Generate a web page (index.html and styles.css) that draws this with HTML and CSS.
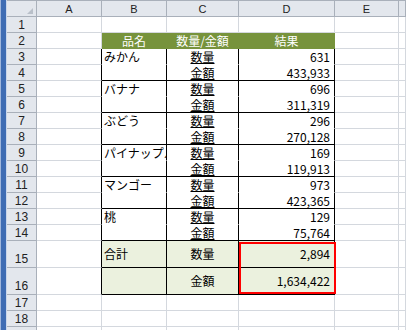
FILE: index.html
```html
<!DOCTYPE html>
<html lang="ja">
<head>
<meta charset="utf-8">
<title>集計</title>
<link rel="stylesheet" href="styles.css">
</head>
<body>
<div class="frame"></div>
<div class="main">
  <div class="topstrip"></div>
  <div class="sheet">
    <div class="h corner"></div><div class="h ch">A</div><div class="h ch">B</div><div class="h ch">C</div><div class="h ch">D</div><div class="h ch">E</div><div class="h ch"></div>

    <div class="h rh">1</div><div class="c"></div><div class="c"></div><div class="c"></div><div class="c"></div><div class="c"></div><div class="c"></div>
    <div class="h rh">2</div><div class="c"></div><div class="c g mid">品名</div><div class="c g mid">数量/金額</div><div class="c g mid">結果</div><div class="c"></div><div class="c"></div>

    <div class="h rh">3</div><div class="c kr"></div><div class="c kr nb txt">みかん</div><div class="c kr nb mid"><u>数量</u></div><div class="c kr nb num">631</div><div class="c"></div><div class="c"></div>
    <div class="h rh">4</div><div class="c kr"></div><div class="c kr kb"></div><div class="c kr kb mid"><u>金額</u></div><div class="c kr kb num">433,933</div><div class="c"></div><div class="c"></div>

    <div class="h rh">5</div><div class="c kr"></div><div class="c kr nb txt">バナナ</div><div class="c kr nb mid"><u>数量</u></div><div class="c kr nb num">696</div><div class="c"></div><div class="c"></div>
    <div class="h rh">6</div><div class="c kr"></div><div class="c kr kb"></div><div class="c kr kb mid"><u>金額</u></div><div class="c kr kb num">311,319</div><div class="c"></div><div class="c"></div>

    <div class="h rh">7</div><div class="c kr"></div><div class="c kr nb txt">ぶどう</div><div class="c kr nb mid"><u>数量</u></div><div class="c kr nb num">296</div><div class="c"></div><div class="c"></div>
    <div class="h rh">8</div><div class="c kr"></div><div class="c kr kb"></div><div class="c kr kb mid"><u>金額</u></div><div class="c kr kb num">270,128</div><div class="c"></div><div class="c"></div>

    <div class="h rh">9</div><div class="c kr"></div><div class="c kr nb txt">パイナップル</div><div class="c kr nb mid"><u>数量</u></div><div class="c kr nb num">169</div><div class="c"></div><div class="c"></div>
    <div class="h rh">10</div><div class="c kr"></div><div class="c kr kb"></div><div class="c kr kb mid"><u>金額</u></div><div class="c kr kb num">119,913</div><div class="c"></div><div class="c"></div>

    <div class="h rh">11</div><div class="c kr"></div><div class="c kr nb txt">マンゴー</div><div class="c kr nb mid"><u>数量</u></div><div class="c kr nb num">973</div><div class="c"></div><div class="c"></div>
    <div class="h rh">12</div><div class="c kr"></div><div class="c kr kb"></div><div class="c kr kb mid"><u>金額</u></div><div class="c kr kb num">423,365</div><div class="c"></div><div class="c"></div>

    <div class="h rh">13</div><div class="c kr"></div><div class="c kr nb txt">桃</div><div class="c kr nb mid"><u>数量</u></div><div class="c kr nb num">129</div><div class="c"></div><div class="c"></div>
    <div class="h rh">14</div><div class="c kr"></div><div class="c kr kb"></div><div class="c kr kb mid"><u>金額</u></div><div class="c kr kb num">75,764</div><div class="c"></div><div class="c"></div>

    <div class="h rh tall">15</div><div class="c kr"></div><div class="c kr kb tot txt">合計</div><div class="c kr kb tot mid">数量</div><div class="c kr kb tot num">2,894</div><div class="c"></div><div class="c"></div>
    <div class="h rh tall">16</div><div class="c kr"></div><div class="c kr kb tot"></div><div class="c kr kb tot mid">金額</div><div class="c kr kb tot num">1,634,422</div><div class="c"></div><div class="c"></div>

    <div class="h rh">17</div><div class="c"></div><div class="c"></div><div class="c"></div><div class="c"></div><div class="c"></div><div class="c"></div>
    <div class="h rh">18</div><div class="c"></div><div class="c"></div><div class="c"></div><div class="c"></div><div class="c"></div><div class="c"></div>
    <div class="h rh">19</div><div class="c"></div><div class="c"></div><div class="c"></div><div class="c"></div><div class="c"></div><div class="c"></div>

    <div class="sel"></div>
  </div>
</div>
</body>
</html>
```
FILE: styles.css
```css
html, body {
  margin: 0;
  padding: 0;
  background: #ffffff;
}
body {
  display: flex;
  width: 406px;
  height: 330px;
  overflow: hidden;
  font-family: "Noto Sans CJK JP", sans-serif;
  font-size: 12px;
  color: #000;
}
.frame {
  width: 7px;
  flex: none;
  background: linear-gradient(to right, #9fb6dc 0 1px, #3e6cb3 1px 6px, #c9d6ea 6px 7px);
}
.main {
  flex: 1;
  display: flex;
  flex-direction: column;
  min-width: 0;
}
.topstrip {
  height: 1px;
  background: #f2f3f5;
  border-bottom: 1px solid #a9b0ba;
}
.sheet {
  position: relative;
  display: grid;
  grid-template-columns: 30px 65px 65px 72px 96px 64px 1fr;
  grid-template-rows: 16px repeat(14, 16px) 27px 27px repeat(3, 16px);
}
.sheet > div {
  box-sizing: border-box;
  min-width: 0;
  overflow: hidden;
  white-space: nowrap;
  display: flex;
  align-items: center;
  line-height: 1;
}
.h {
  background: #e3e7ed;
  border-right: 1px solid #a9b0ba;
  border-bottom: 1px solid #a9b0ba;
  color: #222;
  justify-content: center;
}
.ch {
  font-family: "Liberation Sans", sans-serif;
  font-size: 11px;
  padding-top: 1px;
}
.rh {
  font-family: "Liberation Sans", sans-serif;
  font-size: 12px;
}
.rh.tall {
  align-items: flex-end;
  padding-bottom: 2px;
}
.corner {
  position: relative;
}
.corner::after {
  content: "";
  position: absolute;
  right: 3px;
  bottom: 2px;
  border-style: solid;
  border-width: 0 0 6px 6px;
  border-color: transparent transparent #b9c0c9 transparent;
}
.c {
  background: #ffffff;
  border-right: 1px solid #d4d8de;
  border-bottom: 1px solid #d4d8de;
}
.kr { border-right-color: #000; }
.kb { border-bottom-color: #000; }
.nb { border-bottom-color: transparent; }
.g {
  background: #77933c;
  color: #ffffff;
  border-right-color: transparent;
  border-bottom-color: transparent;
}
.tot { background: #ebf1de; }
.txt {
  justify-content: flex-start;
  padding-left: 2px;
}
.mid { justify-content: center; }
.num {
  justify-content: flex-end;
  padding-right: 4px;
}
u {
  text-decoration: underline;
  text-underline-offset: 1px;
}
.sheet > .sel {
  position: absolute;
  grid-column: 5 / 6;
  grid-row: 16 / 18;
  top: 1px;
  left: 0;
  right: -1px;
  bottom: 1px;
  border: 2px solid #ff0000;
  background: transparent;
  overflow: visible;
}
```
